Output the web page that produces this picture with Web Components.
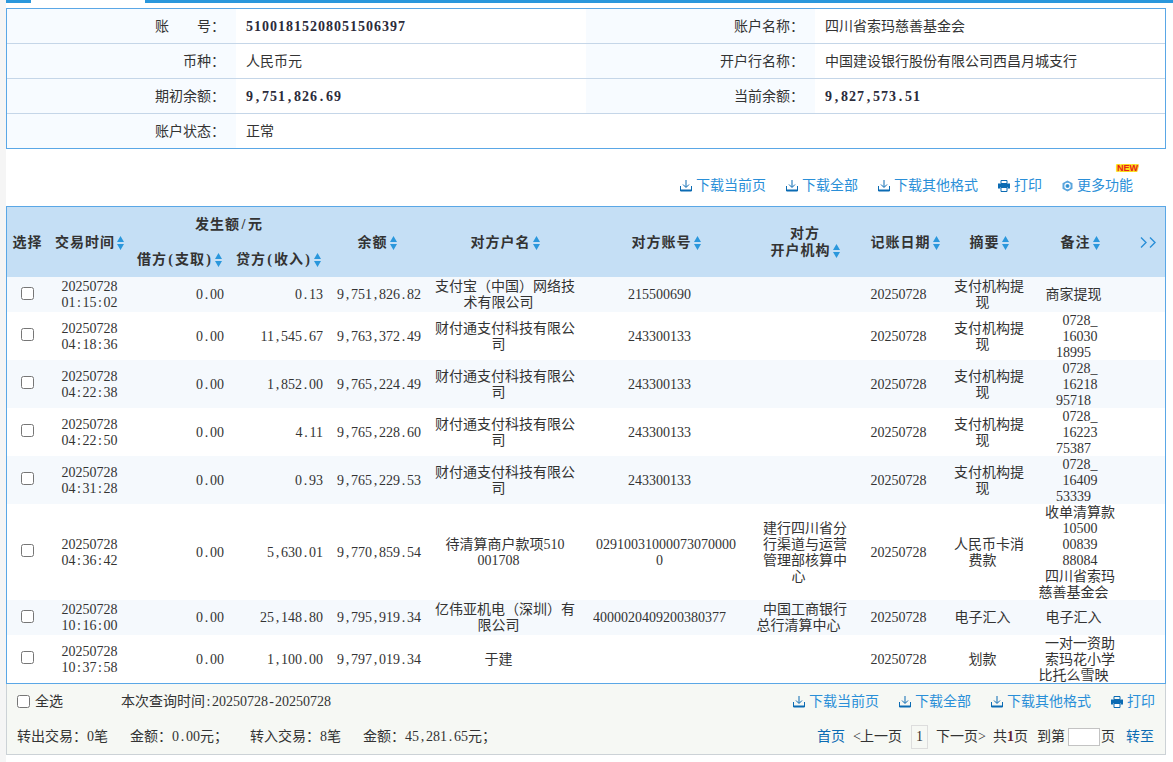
<!DOCTYPE html>
<html lang="zh">
<head>
<meta charset="utf-8">
<title>账户明细</title>
<style>
	html, body { margin: 0; padding: 0; background: #fff; }
	/* serif first: its digits are 7px wide at 14px, and it keeps line boxes stable */
	body { font: 14px/16px "Liberation Serif", "Noto Sans CJK SC", serif; color: #333; overflow: hidden; }
</style>
</head>
<body>
<app-page>
	<tab-strip></tab-strip>
	<account-panel></account-panel>
	<link-bar></link-bar>
	<txn-table></txn-table>
	<txn-footer></txn-footer>
</app-page>

<script>
// digits in the original are a 7px-per-char font, so punctuation gets the same cell width
const ASCII_CSS = `
	.n i { font-style: normal; display: inline-block; width: 7px; text-align: center; }
`;
function fmt(text) {
	return text.replace(/[\x21-\x7e]+/g, run =>
		'<span class="n">' + run.replace(/[^0-9]/g, c => `<i>${c === '<' ? '&lt;' : c === '>' ? '&gt;' : c}</i>`) + '</span>');
}

// page frame, grey strip on the left
class AppPage extends HTMLElement {
	constructor() {
		super();
		this.attachShadow({mode: 'open'}).innerHTML = `
		<style>
			:host { display: block; box-sizing: border-box; height: 762px; width: 1173px;
				border-left: 6px solid #f5f5f5; padding-right: 7px; }
		</style>
		<slot></slot>`;
	}
}

// the blue line of the tab bar, with a gap where the active tab sits
class TabStrip extends HTMLElement {
	constructor() {
		super();
		this.attachShadow({mode: 'open'}).innerHTML = `
		<style>
			:host { display: flex; height: 8px; margin-right: -7px; }
			div { height: 3px; background: #2a97dc; box-sizing: border-box; }
			.left { width: 25px; }
			.gap { width: 114px; background: #fff; }
			.right { flex: 1; }
		</style>
		<div class="left"></div><div class="gap"></div><div class="right"></div>`;
	}
}

class AccountPanel extends HTMLElement {
	constructor() {
		super();
		const rows = [
			['账　　号：', '51001815208051506397', true, '账户名称：', '四川省索玛慈善基金会', false],
			['币种：', '人民币元', false, '开户行名称：', '中国建设银行股份有限公司西昌月城支行', false],
			['期初余额：', '9,751,826.69', true, '当前余额：', '9,827,573.51', true],
			['账户状态：', '正常', false],
		];
		const value = (text, bold) => `<td class="val${bold ? ' b' : ''}">${fmt(text)}</td>`;
		const body = rows.map(r => `<tr>
			<td class="lab">${r[0]}</td>${value(r[1], r[2])}
			${r.length > 3 ? `<td class="lab">${r[3]}</td>${value(r[4], r[5])}` : '<td colspan="2"></td>'}
		</tr>`).join('');
		this.attachShadow({mode: 'open'}).innerHTML = `
		<style>
			:host { display: block; border: 1px solid #5aa7e6; }
			${ASCII_CSS}
			table { border-collapse: separate; border-spacing: 0; table-layout: fixed; width: 1158px; }
			td { height: 35px; padding: 2px 0 0; box-sizing: border-box; border-bottom: 1px solid #c5d6e8; }
			tr:last-child td { height: 34px; border-bottom: 0; }
			.lab { background: #f7fbff; text-align: right; padding-right: 11px; }
			.val { padding-left: 10px; }
			.b .n { font-weight: bold; letter-spacing: 1px; color: #2b2b3a; }
			.b .n i { width: 8px; }
		</style>
		<table>
			<colgroup><col style="width:229px"><col style="width:350px"><col style="width:229px"><col style="width:350px"></colgroup>
			${body}
		</table>`;
	}
}

const ICONS = {
	dl: `<svg width="12" height="12" viewBox="0 0 12 12"><path d="M6 0V7M3 4.5 6 7.5 9 4.5" fill="none" stroke="#0b6bb3"/><path d="M.5 6V11H11.5V6" fill="none" stroke="#0b6bb3"/><path d="M1 9.5H11V11H1Z" fill="#0b6bb3"/></svg>`,
	print: `<svg width="12" height="12" viewBox="0 0 12 12"><path d="M3 .5H9V3.5H3Z" fill="none" stroke="#0b6bb3"/><path d="M0 3.5H12V8.5H9.5V7H2.5V8.5H0Z" fill="#0b6bb3"/><path d="M3 7.5H9V11.5H3Z" fill="#fff" stroke="#0b6bb3"/></svg>`,
	gear: `<svg width="11" height="12" viewBox="0 0 11 12"><path d="M5.5 .5 10.5 3.2V8.8L5.5 11.5.5 8.8V3.2Z" fill="#5aa5dd"/><circle cx="5.5" cy="6" r="2.6" fill="none" stroke="#fff" stroke-width="1.1"/><circle cx="5.5" cy="6" r="1.3" fill="#2a8fd0"/></svg>`,
};

// a toolbar link: icon + slotted label
class ToolLink extends HTMLElement {
	constructor() {
		super();
		this.attachShadow({mode: 'open'}).innerHTML = `
		<style>
			:host { display: inline-flex; align-items: center; height: 16px; color: #2a8fd8; position: relative; }
			.ic { display: flex; margin-right: 4px; }
			.new { position: absolute; left: 55px; top: -14px; font: bold 9px/9px "Liberation Sans", sans-serif;
				color: #e8201a; letter-spacing: 0;
				text-shadow: 1px 0 #fbdc1a, -1px 0 #fbdc1a, 0 1px #fbdc1a, 0 -1px #fbdc1a, 1px 1px #fbdc1a, -1px -1px #fbdc1a, 1px -1px #fbdc1a, -1px 1px #fbdc1a; }
		</style>
		<span class="ic">${ICONS[this.getAttribute('icon')]}</span><slot></slot>
		${this.hasAttribute('new') ? '<span class="new">NEW</span>' : ''}`;
	}
}

class LinkBar extends HTMLElement {
	constructor() {
		super();
		this.attachShadow({mode: 'open'}).innerHTML = `
		<style>
			:host { display: flex; justify-content: flex-end; align-items: flex-start; gap: 20px; height: 57px; box-sizing: border-box;
				padding: 29px 33px 0 0; }
		</style>
		<tool-link icon="dl">下载当前页</tool-link>
		<tool-link icon="dl">下载全部</tool-link>
		<tool-link icon="dl">下载其他格式</tool-link>
		<tool-link icon="print">打印</tool-link>
		<tool-link icon="gear" new>更多功能</tool-link>`;
	}
}

const SORT = `<svg class="sort" width="7" height="14" viewBox="0 0 7 14"><path d="M3.5 0 7 6H0ZM0 8H7L3.5 14Z" fill="#2a97dc"/></svg>`;

// one line per |-part: every line but the last fills the cell, the last one sits left of centre
const RECORDS = [
	['20250728|01:15:02', '0.00', '0.13', '9,751,826.82', '支付宝（中国）网络技|术有限公司', '215500690', '', '20250728', '支付机构提|现', '商家提现', 35],
	['20250728|04:18:36', '0.00', '11,545.67', '9,763,372.49', '财付通支付科技有限公|司', '243300133', '', '20250728', '支付机构提|现', '0728_|16030|18995', 48],
	['20250728|04:22:38', '0.00', '1,852.00', '9,765,224.49', '财付通支付科技有限公|司', '243300133', '', '20250728', '支付机构提|现', '0728_|16218|95718', 48],
	['20250728|04:22:50', '0.00', '4.11', '9,765,228.60', '财付通支付科技有限公|司', '243300133', '', '20250728', '支付机构提|现', '0728_|16223|75387', 48],
	['20250728|04:31:28', '0.00', '0.93', '9,765,229.53', '财付通支付科技有限公|司', '243300133', '', '20250728', '支付机构提|现', '0728_|16409|53339', 48],
	['20250728|04:36:42', '0.00', '5,630.01', '9,770,859.54', '待清算商户款项510|001708', '02910031000073070000|0', '建行四川省分|行渠道与运营|管理部核算中|心', '20250728', '人民币卡消|费款', '收单清算款|10500|00839|88084|四川省索玛|慈善基金会', 96],
	['20250728|10:16:00', '0.00', '25,148.80', '9,795,919.34', '亿伟亚机电（深圳）有|限公司', '4000020409200380377', '中国工商银行|总行清算中心', '20250728', '电子汇入', '电子汇入', 35],
	['20250728|10:37:58', '0.00', '1,100.00', '9,797,019.34', '于建', '', '', '20250728', '划款', '一对一资助|索玛花小学|比托么雪映', 48],
];

class TxnTable extends HTMLElement {
	constructor() {
		super();
		this.shadowEl = this.attachShadow({mode: 'open'});
		const lines = text => {
			const parts = text.split('|');
			return parts.map((p, i) => i < parts.length - 1 ? `<span class="w">${fmt(p)}</span>` : fmt(p)).join('');
		};
		const rows = RECORDS.map((r, i) => `<tr class="${i % 2 ? '' : 'alt'} ${r[10] === 35 ? 'low' : ''}" style="height:${r[10]}px">
			<td class="c"><input type="checkbox"></td>
			<td><div class="in">${r[0].split('|').map(fmt).join('<br>')}</div></td>
			<td class="r"><div class="in">${fmt(r[1])}</div></td>
			<td class="r"><div class="in">${fmt(r[2])}</div></td>
			<td class="r"><div class="in">${fmt(r[3])}</div></td>
			${[4, 5, 6, 7, 8, 9].map(k => `<td class="t"><div class="in">${lines(r[k])}</div></td>`).join('')}
			<td></td>
		</tr>`).join('');
		this.shadowEl.innerHTML = `
		<style>
			:host { display: block; border: 1px solid #5aa7e6; height: 476px; overflow: hidden; }
			${ASCII_CSS}
			table { border-collapse: separate; border-spacing: 0; table-layout: fixed; width: 1158px; }
			th { background: #c5dff5; padding: 0 2px 0 0; font-weight: bold; letter-spacing: 1px; line-height: 17px; height: 35px; white-space: nowrap; }
			th:nth-child(-n+2), th:last-child { padding-right: 0; }
			tr + tr th:nth-child(-n+2) { padding-right: 2px; }
			th .n i { width: 8px; }
			.sort { vertical-align: -3px; margin-left: 2px; }
			.more { vertical-align: -1px; }
			td { padding: 0; line-height: 16px; white-space: nowrap; text-align: center; }
			.in { padding-top: 1px; margin-bottom: -1px; }
			.low .in { padding-top: 0; margin-bottom: 0; }
			tr.alt td { background: #f5f9fd; }
			td.r { text-align: right; padding-right: 6px; }
			td.t { padding-right: 15px; }
			.w { display: block; margin-right: -13px; }
			input { display: block; margin: -3px auto 0; width: 13px; height: 13px; }
		</style>
		<table>
			<colgroup>
				${[41, 83, 99, 99, 98, 158, 164, 114, 86, 82, 100, 34].map(w => `<col style="width:${w}px">`).join('')}
			</colgroup>
			<thead>
				<tr>
					<th rowspan="2">选择</th>
					<th rowspan="2">交易时间${SORT}</th>
					<th colspan="2">${fmt('发生额/元')}</th>
					<th rowspan="2">余额${SORT}</th>
					<th rowspan="2">对方户名${SORT}</th>
					<th rowspan="2">对方账号${SORT}</th>
					<th rowspan="2">对方<br>开户机构${SORT}</th>
					<th rowspan="2">记账日期${SORT}</th>
					<th rowspan="2">摘要${SORT}</th>
					<th rowspan="2">备注${SORT}</th>
					<th rowspan="2"><svg class="more" width="16" height="11" viewBox="0 0 16 11"><path d="M1 .5 6 5.5 1 10.5M10 .5 15 5.5 10 10.5" fill="none" stroke="#2a8fd8" stroke-width="1.4"/></svg></th>
				</tr>
				<tr>
					<th>${fmt('借方(支取)')}${SORT}</th>
					<th>${fmt('贷方(收入)')}${SORT}</th>
				</tr>
			</thead>
			<tbody>${rows}</tbody>
		</table>`;
	}
}

class TxnFooter extends HTMLElement {
	constructor() {
		super();
		this.attachShadow({mode: 'open'}).innerHTML = `
		<style>
			:host { display: block; box-sizing: border-box; height: 71px; background: #f6f8f4;
				border: 1px solid #ccd2d6; border-top: 0; padding: 0 10px; }
			${ASCII_CSS}
			.row { display: flex; justify-content: space-between; align-items: center; }
			.top { height: 35px; }
			.bot { height: 35px; }
			.side { display: flex; align-items: center; }
			input[type=checkbox] { margin: 0 5px 0 0; width: 13px; height: 13px; }
			.when { margin-left: 58px; }
			.links { display: flex; gap: 20px; }
			.sums { display: flex; gap: 22px; }
			.pager { margin-right: 1px; }
			.pager span.a { color: #0b6bb3; }
			.num { box-sizing: border-box; width: 17px; height: 24px; margin: 0 8px 0 9px; border: 1px solid #ddd;
				display: flex; align-items: center; justify-content: center; }
			.pager > span { margin-right: 9px; }
			.pager > span.first { margin-right: 8px; }
			.pager > span.next { margin-right: 8px; }
			.go { box-sizing: border-box; width: 32px; height: 18px; margin: 0 1px 0 3px; padding: 0; background: #fff; border: 1px solid #c3c3c3; }
			.pager > span.end { margin: 0 0 0 11px; }
			.pager > span.tail { margin-right: 0; }
			.pager > span.lead { margin-right: 0; }
			b.n { color: #6b2030; }
		</style>
		<div class="row top">
			<div class="side"><input type="checkbox"><span>全选</span><span class="when">本次查询时间${fmt(':20250728-20250728')}</span></div>
			<div class="links">
				<tool-link icon="dl">下载当前页</tool-link>
				<tool-link icon="dl">下载全部</tool-link>
				<tool-link icon="dl">下载其他格式</tool-link>
				<tool-link icon="print">打印</tool-link>
			</div>
		</div>
		<div class="row bot">
			<div class="sums">
				<span>转出交易：${fmt('0')}笔</span>
				<span>金额：${fmt('0.00')}元；</span>
				<span>转入交易：${fmt('8')}笔</span>
				<span>金额：${fmt('45,281.65')}元；</span>
			</div>
			<div class="side pager">
				<span class="a first">首页</span>
				<span class="lead">${fmt('<')}上一页</span>
				<div class="num">${fmt('1')}</div>
				<span class="next">下一页${fmt('>')}</span>
				<span>共<b class="n">1</b>页</span>
				<span class="lead">到第</span>
				<input class="go" type="text">
				<span class="tail">页</span>
				<span class="a end">转至</span>
			</div>
		</div>`;
	}
}

customElements.define('app-page', AppPage);
customElements.define('tab-strip', TabStrip);
customElements.define('account-panel', AccountPanel);
customElements.define('tool-link', ToolLink);
customElements.define('link-bar', LinkBar);
customElements.define('txn-table', TxnTable);
customElements.define('txn-footer', TxnFooter);
</script>
</body>
</html>
